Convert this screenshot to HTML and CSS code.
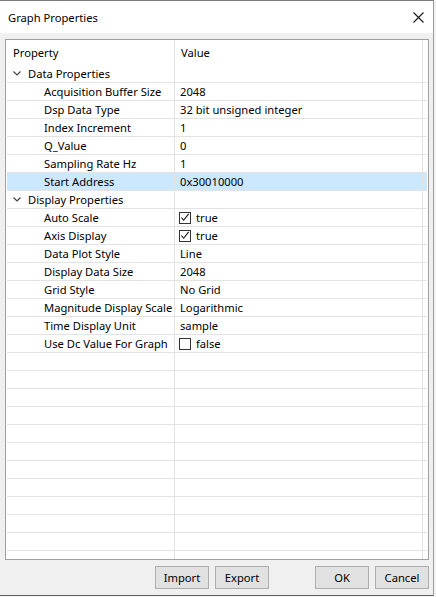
FILE: index.html
```html
<!DOCTYPE html>
<html>
<head>
<meta charset="utf-8">
<title>Graph Properties</title>
<link rel="stylesheet" href="styles.css">
</head>
<body>
<div class="window">
  <div class="titlebar">
    <span class="title">Graph Properties</span>
    <svg class="close" width="11" height="11" viewBox="0 0 11 11"><path d="M0.5 0.5 L10.5 10.5 M10.5 0.5 L0.5 10.5" stroke="#1a1a1a" stroke-width="1.1" fill="none"/></svg>
  </div>
  <div class="content">
    <div class="grid">
      <div class="row header"><div class="c1">Property</div><div class="c2">Value</div><div class="c3"></div></div>
      <div class="row group"><div class="c1"><svg class="chev" width="8" height="5" viewBox="0 0 8 5"><path d="M0.5 0.5 L4 4 L7.5 0.5" stroke="#444" stroke-width="1.2" fill="none"/></svg>Data Properties</div><div class="c2"></div><div class="c3"></div></div>
      <div class="row"><div class="c1 child">Acquisition Buffer Size</div><div class="c2">2048</div><div class="c3"></div></div>
      <div class="row"><div class="c1 child">Dsp Data Type</div><div class="c2">32 bit unsigned integer</div><div class="c3"></div></div>
      <div class="row"><div class="c1 child">Index Increment</div><div class="c2">1</div><div class="c3"></div></div>
      <div class="row"><div class="c1 child">Q_Value</div><div class="c2">0</div><div class="c3"></div></div>
      <div class="row"><div class="c1 child">Sampling Rate Hz</div><div class="c2">1</div><div class="c3"></div></div>
      <div class="row selected"><div class="c1 child">Start Address</div><div class="c2">0x30010000</div><div class="c3"></div></div>
      <div class="row group"><div class="c1"><svg class="chev" width="8" height="5" viewBox="0 0 8 5"><path d="M0.5 0.5 L4 4 L7.5 0.5" stroke="#444" stroke-width="1.2" fill="none"/></svg>Display Properties</div><div class="c2"></div><div class="c3"></div></div>
      <div class="row"><div class="c1 child">Auto Scale</div><div class="c2"><span class="check on"><svg width="11" height="11" viewBox="0 0 11 11"><path d="M1.5 5.5 L4 8.5 L9.5 1.5" stroke="#111" stroke-width="1.2" fill="none"/></svg></span>true</div><div class="c3"></div></div>
      <div class="row"><div class="c1 child">Axis Display</div><div class="c2"><span class="check on"><svg width="11" height="11" viewBox="0 0 11 11"><path d="M1.5 5.5 L4 8.5 L9.5 1.5" stroke="#111" stroke-width="1.2" fill="none"/></svg></span>true</div><div class="c3"></div></div>
      <div class="row"><div class="c1 child">Data Plot Style</div><div class="c2">Line</div><div class="c3"></div></div>
      <div class="row"><div class="c1 child">Display Data Size</div><div class="c2">2048</div><div class="c3"></div></div>
      <div class="row"><div class="c1 child">Grid Style</div><div class="c2">No Grid</div><div class="c3"></div></div>
      <div class="row"><div class="c1 child">Magnitude Display Scale</div><div class="c2">Logarithmic</div><div class="c3"></div></div>
      <div class="row"><div class="c1 child">Time Display Unit</div><div class="c2">sample</div><div class="c3"></div></div>
      <div class="row"><div class="c1 child">Use Dc Value For Graph</div><div class="c2"><span class="check"></span>false</div><div class="c3"></div></div>
      <div class="row"><div class="c1"></div><div class="c2"></div><div class="c3"></div></div>
      <div class="row"><div class="c1"></div><div class="c2"></div><div class="c3"></div></div>
      <div class="row"><div class="c1"></div><div class="c2"></div><div class="c3"></div></div>
      <div class="row"><div class="c1"></div><div class="c2"></div><div class="c3"></div></div>
      <div class="row"><div class="c1"></div><div class="c2"></div><div class="c3"></div></div>
      <div class="row"><div class="c1"></div><div class="c2"></div><div class="c3"></div></div>
      <div class="row"><div class="c1"></div><div class="c2"></div><div class="c3"></div></div>
      <div class="row"><div class="c1"></div><div class="c2"></div><div class="c3"></div></div>
      <div class="row"><div class="c1"></div><div class="c2"></div><div class="c3"></div></div>
      <div class="row"><div class="c1"></div><div class="c2"></div><div class="c3"></div></div>
      <div class="row"><div class="c1"></div><div class="c2"></div><div class="c3"></div></div>
      <div class="row"><div class="c1"></div><div class="c2"></div><div class="c3"></div></div>
      <div class="row"><div class="c1"></div><div class="c2"></div><div class="c3"></div></div>
    </div>
    <div class="buttons">
      <button class="btn">Import</button>
      <button class="btn">Export</button>
      <button class="btn spaced">OK</button>
      <button class="btn">Cancel</button>
    </div>
  </div>
</div>
</body>
</html>
```
FILE: styles.css
```css
* { box-sizing: border-box; }
html, body { margin: 0; padding: 0; }
body {
  background: #f3f3f3;
  font-family: "Noto Sans", "Open Sans", sans-serif;
  font-size: 11.2px;
  color: #000;
  width: 436px;
  height: 597px;
  overflow: hidden;
}
.window {
  width: 434px;
  height: 596px;
  background: #f0f0f0;
  border-top: 1px solid #7a7a7a;
  border-right: 1px solid #9a9a9a;
  border-bottom: 1px solid #5f5f5f;
  display: flex;
  flex-direction: column;
}
.titlebar {
  height: 32px;
  background: #fff;
  display: flex;
  align-items: center;
  justify-content: space-between;
  padding: 0 9px 0 8px;
  flex: none;
}
.title { font-size: 11.2px; }
.close { display: block; margin-top: 1px; }
.content {
  flex: 1;
  padding: 6px 4px 6px 5px;
  display: flex;
  flex-direction: column;
}
.grid {
  height: 521px;
  flex: none;
  background: #fff;
  border: 1px solid #a0a0a0;
  padding: 0 1px 1px 1px;
  overflow: hidden;
}
.row {
  display: grid;
  grid-template-columns: 168px 248px 4px;
  height: 18px;
  border-bottom: 1px solid #e3e3e3;
  line-height: 17px;
  white-space: nowrap;
}
.row.header {
  height: 25px;
  border-bottom: none;
  line-height: 25px;
}
.row.selected { background: #cce8ff; }
.c1, .c2 { border-right: 1px solid #e3e3e3; overflow: hidden; }
.c1 { padding-left: 6px; display: flex; align-items: center; }
.c1.child { padding-left: 37px; }
.c2 { padding-left: 5px; display: flex; align-items: center; }
.header .c2 { padding-left: 6px; }
.chev { display: block; margin-right: 7px; flex: none; }
.check {
  width: 12px;
  height: 12px;
  border: 1px solid #333;
  background: #fff;
  margin: 0 5px 0 -1px;
  display: flex;
  align-items: center;
  justify-content: center;
  flex: none;
}
.check svg { display: block; }
.buttons {
  margin-top: 6px;
  height: 23px;
  display: flex;
  justify-content: flex-end;
  gap: 6px;
}
.btn {
  width: 54px;
  height: 23px;
  background: #e1e1e1;
  border: 1px solid #adadad;
  border-radius: 0;
  font-family: "Noto Sans", "Open Sans", sans-serif;
  font-size: 11.2px;
  color: #000;
  padding: 0;
  margin: 0;
}
.btn.spaced { margin-left: 40px; }
```
